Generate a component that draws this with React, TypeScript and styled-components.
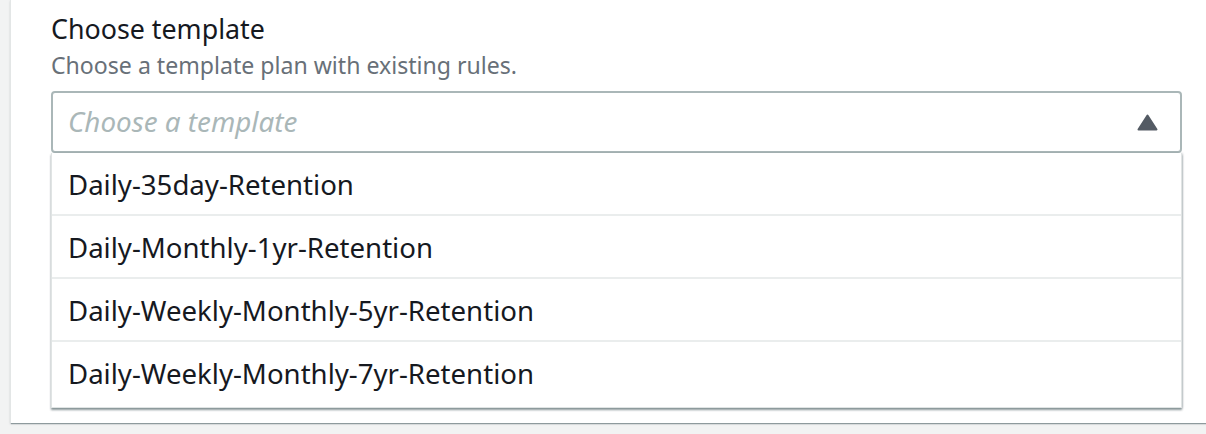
import React from "react";
import styled, { createGlobalStyle } from "styled-components";

const Global = createGlobalStyle`
  html, body { margin: 0; padding: 0; background: #f2f3f3; }
  body { font-family: "Noto Sans", "Open Sans", sans-serif; }
`;

const Page = styled.div`
  width: 1206px;
  height: 434px;
  overflow: hidden;
  background: #f2f3f3;
  padding-left: 10px;
  box-sizing: border-box;
`;

const Card = styled.div`
  width: 1220px;
  height: 423px;
  background: #fff;
  border-left: 1px solid #e3e6e6;
  box-shadow: 0 2px 1px -1px rgba(0, 28, 36, 0.35), 0 1px 2px rgba(0, 28, 36, 0.15);
  padding: 11px 0 0 40px;
  box-sizing: border-box;
`;

const Field = styled.div`
  width: 1131px;
  display: flex;
  flex-direction: column;
`;

const Label = styled.div`
  font-size: 26.8px;
  line-height: 36px;
  color: #16191f;
`;

const Description = styled.div`
  font-size: 23.1px;
  line-height: 30px;
  color: #687078;
  margin-top: 3px;
`;

const Trigger = styled.div`
  margin-top: 11px;
  height: 62px;
  border: 2px solid #aab7b8;
  border-radius: 4px;
  display: flex;
  align-items: center;
  justify-content: space-between;
  padding: 0 22px 0 15px;
  box-sizing: border-box;
`;

const Placeholder = styled.span`
  font-size: 27.8px;
  font-style: italic;
  color: #aab7b8;
  margin-top: -2px;
`;

const Caret = styled.svg`
  width: 21px;
  height: 17px;
  display: block;
`;

const Menu = styled.ul`
  list-style: none;
  margin: 0;
  padding: 0;
  width: 1131px;
  border: 1px solid #e0e4e4;
  border-top: none;
  background: #fff;
  box-shadow: 0 2px 2px rgba(0, 28, 36, 0.45), 1px 0 2px rgba(0, 28, 36, 0.15);
  box-sizing: border-box;
`;

const Option = styled.li<{ $last?: boolean }>`
  height: ${(p) => (p.$last ? 65 : 63)}px;
  display: flex;
  align-items: center;
  padding-left: 16px;
  padding-bottom: ${(p) => (p.$last ? 4 : 0)}px;
  box-sizing: border-box;
  font-size: 27.6px;
  color: #16191f;
  border-bottom: ${(p) => (p.$last ? "none" : "2px solid #eaeded")};
`;

const options = [
  "Daily-35day-Retention",
  "Daily-Monthly-1yr-Retention",
  "Daily-Weekly-Monthly-5yr-Retention",
  "Daily-Weekly-Monthly-7yr-Retention",
];

export default function App() {
  return (
    <Page>
      <Global />
      <Card>
        <Field>
          <Label>Choose template</Label>
          <Description>Choose a template plan with existing rules.</Description>
          <Trigger>
            <Placeholder>Choose a template</Placeholder>
            <Caret viewBox="0 0 21 17">
              <path d="M10.5 1.5 L19.5 15.5 H1.5 Z" fill="#545b64" stroke="#545b64" strokeWidth="2" strokeLinejoin="round" />
            </Caret>
          </Trigger>
          <Menu>
            {options.map((o, i) => (
              <Option key={o} $last={i === options.length - 1}>
                {o}
              </Option>
            ))}
          </Menu>
        </Field>
      </Card>
    </Page>
  );
}
